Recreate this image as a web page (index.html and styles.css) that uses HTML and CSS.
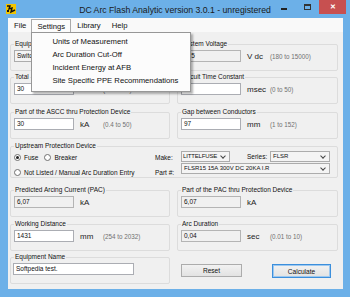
FILE: index.html
```html
<!DOCTYPE html>
<html lang="en">
<head>
    <meta charset="UTF-8">
    <title>DC Arc Flash Analytic</title>
    <link rel="stylesheet" href="styles.css">
</head>
<body>
<div class="window">
    <!-- Title bar -->
    <div class="titlebar">
        <div class="tb-left">
            <svg class="app-icon" width="10" height="10" viewBox="0 0 10 10">
                <rect width="10" height="10" fill="#f2c400"/>
                <path d="M1 2 L4 2 L3 5 L6 4 L5 8 L9 6" fill="none" stroke="#111" stroke-width="1.4"/>
                <rect x="1" y="6" width="2" height="2" fill="#111"/>
            </svg>
        </div>
        <div class="title">DC Arc Flash Analytic version 3.0.1 - unregistered</div>
        <div class="tb-right">
            <span class="cap-btn cap-min"><span class="min-bar"></span></span>
            <span class="cap-btn cap-max"><span class="max-box"></span></span>
            <span class="cap-btn cap-close">&#x2715;</span>
        </div>
    </div>

    <div class="frame">
        <!-- Menu bar -->
        <div class="menubar">
            <span class="menu-item">File</span>
            <span class="menu-item open">Settings
                <div class="dropdown">
                    <div class="dd-item">Units of Measurement</div>
                    <div class="dd-item">Arc Duration Cut-Off</div>
                    <div class="dd-item">Incident Energy at AFB</div>
                    <div class="dd-item">Site Specific PPE Recommendations</div>
                </div>
            </span>
            <span class="menu-item">Library</span>
            <span class="menu-item">Help</span>
        </div>

        <div class="client">
            <!-- row 1 -->
            <fieldset class="group">
                <legend>Equip</legend>
                <div class="field">
                    <span class="combo equip">Switc</span>
                </div>
            </fieldset>
            <fieldset class="group">
                <legend>System Voltage</legend>
                <div class="field">
                    <span class="tb ro">125</span>
                    <span class="unit">V dc</span>
                    <span class="range">(180 to 15000)</span>
                </div>
            </fieldset>

            <!-- row 2 -->
            <fieldset class="group">
                <legend>Total</legend>
                <div class="field">
                    <span class="tb">30</span>
                    <span class="unit">kA</span>
                    <span class="range">(0.4 to 50)</span>
                </div>
            </fieldset>
            <fieldset class="group">
                <legend>Circuit Time Constant</legend>
                <div class="field">
                    <span class="tb">5</span>
                    <span class="unit">msec</span>
                    <span class="range">(0 to 50)</span>
                </div>
            </fieldset>

            <!-- row 3 -->
            <fieldset class="group">
                <legend>Part of the ASCC thru Protection Device</legend>
                <div class="field">
                    <span class="tb">30</span>
                    <span class="unit">kA</span>
                    <span class="range">(0.4 to 50)</span>
                </div>
            </fieldset>
            <fieldset class="group">
                <legend>Gap between Conductors</legend>
                <div class="field">
                    <span class="tb">97</span>
                    <span class="unit">mm</span>
                    <span class="range">(1 to 152)</span>
                </div>
            </fieldset>

            <!-- row 4 -->
            <fieldset class="group upstream">
                <legend>Upstream Protection Device</legend>
                <div class="up-body">
                    <div class="radios">
                        <div class="radio-row">
                            <span class="opt"><span class="radio on"></span>Fuse</span>
                            <span class="opt"><span class="radio"></span>Breaker</span>
                        </div>
                        <div class="radio-row">
                            <span class="opt"><span class="radio"></span>Not Listed / Manual Arc Duration Entry</span>
                        </div>
                    </div>
                    <div class="part-labels">
                        <span>Make:</span>
                        <span>Part #:</span>
                    </div>
                    <div class="combos">
                        <div class="combo-row">
                            <span class="combo make">LITTELFUSE</span>
                            <span class="series-label">Series:</span>
                            <span class="combo series">FLSR</span>
                        </div>
                        <span class="combo part">FLSR15 15A 300V DC 20KA I.R</span>
                    </div>
                </div>
            </fieldset>

            <!-- row 5 -->
            <fieldset class="group">
                <legend>Predicted Arcing Current (PAC)</legend>
                <div class="field">
                    <span class="tb ro">6,07</span>
                    <span class="unit">kA</span>
                </div>
            </fieldset>
            <fieldset class="group">
                <legend>Part of the PAC thru Protection Device</legend>
                <div class="field">
                    <span class="tb ro">6,07</span>
                    <span class="unit">kA</span>
                </div>
            </fieldset>

            <!-- row 6 -->
            <fieldset class="group">
                <legend>Working Distance</legend>
                <div class="field">
                    <span class="tb">1431</span>
                    <span class="unit">mm</span>
                    <span class="range">(254 to 2032)</span>
                </div>
            </fieldset>
            <fieldset class="group">
                <legend>Arc Duration</legend>
                <div class="field">
                    <span class="tb ro">0,04</span>
                    <span class="unit">sec</span>
                    <span class="range">(0.01 to 10)</span>
                </div>
            </fieldset>

            <!-- row 7 -->
            <fieldset class="group">
                <legend>Equipment Name</legend>
                <div class="field">
                    <span class="tb wide">Softpedia test.</span>
                </div>
            </fieldset>
            <div class="buttons">
                <button class="btn reset">Reset</button>
                <button class="btn calc">Calculate</button>
            </div>
        </div>
    </div>
</div>
</body>
</html>
```

FILE: styles.css
```css
* {
    box-sizing: border-box;
}

body {
    margin: 0;
    font-family: "Liberation Sans", Arial, sans-serif;
    background-color: #6cb0e8;
}

.window {
    width: 350px;
    height: 297px;
    background-color: #6cb0e8;
    display: flex;
    flex-direction: column;
}

/* Title bar */
.titlebar {
    height: 18px;
    display: grid;
    grid-template-columns: 1fr auto 1fr;
    align-items: center;
}

.tb-left {
    padding-left: 6px;
    display: flex;
    align-items: center;
}

.title {
    font-size: 8.7px;
    color: #1a1a1a;
    margin-top: 2px;
}

.tb-right {
    display: flex;
    justify-content: flex-end;
    align-self: start;
    padding-right: 4px;
}

.cap-btn {
    height: 14px;
    display: flex;
    align-items: center;
    justify-content: center;
}

.cap-min {
    width: 24px;
}

.min-bar {
    width: 6px;
    height: 2px;
    background-color: #222;
    margin-top: 4px;
}

.cap-max {
    width: 23px;
}

.max-box {
    width: 7px;
    height: 6px;
    border: 1px solid #333;
    border-top-width: 2px;
}

.cap-close {
    width: 27px;
    background-color: #c75050;
    color: #fff;
    font-size: 7px;
    font-weight: bold;
}

/* Frame */
.frame {
    flex: 1;
    margin: 0 7px 8px 8px;
    background-color: #f0f0f0;
    display: flex;
    flex-direction: column;
}

.menubar {
    height: 14px;
    background-color: #f9f9f9;
    display: flex;
    align-items: stretch;
    font-size: 7.7px;
    color: #111;
}

.menu-item {
    position: relative;
    padding: 3px 5px 0 6px;
}

.menu-item.open {
    background-color: #fcfcfc;
    border: 1px solid #a9a9a9;
    border-bottom: none;
    padding: 2px 5px 0 5px;
    margin-top: 1px;
}

.dropdown {
    position: absolute;
    top: 12px;
    left: -1px;
    width: 160px;
    padding: 2px 0 4px;
    background-color: #fcfcfc;
    border: 1px solid #979797;
    box-shadow: 2px 2px 2px rgba(0, 0, 0, 0.3);
    z-index: 10;
}

.dd-item {
    height: 13px;
    line-height: 13px;
    padding-left: 20px;
    white-space: nowrap;
}

/* Client area */
.client {
    flex: 1;
    padding: 8px 4px 0 2px;
    display: grid;
    grid-template-columns: 160px 161px;
    grid-template-rows: 33px 35px 34px 44px 34px 33px 31px;
    column-gap: 7px;
}

.group {
    margin: 0;
    padding: 2px 3px 0;
    border: 1px solid #dcdcdc;
    border-radius: 2px;
    height: 31px;
    min-width: 0;
}

.group legend {
    font-size: 6.5px;
    line-height: 8px;
    padding: 0 1px;
    margin-left: 0;
    color: #111;
    white-space: nowrap;
}

.field {
    display: flex;
    align-items: center;
    height: 12px;
}

.tb {
    width: 60px;
    height: 12px;
    border: 1px solid #abadb3;
    background-color: #fff;
    font-size: 6.5px;
    line-height: 10px;
    padding-left: 2px;
    color: #111;
    white-space: nowrap;
    overflow: hidden;
}

.tb.ro {
    background-color: #f0f0f0;
    border-color: #b4b4b4;
}

.tb.wide {
    width: 121px;
    margin-left: -1px;
}

.unit {
    width: 23px;
    margin-left: 6px;
    font-size: 8px;
    color: #222;
}

.range {
    font-size: 6.3px;
    color: #707070;
    white-space: nowrap;
}

/* Combo boxes */
.combo {
    position: relative;
    height: 11px;
    border: 1px solid #acacac;
    background-color: #f4f4f4;
    font-size: 6px;
    line-height: 9px;
    padding-left: 2px;
    color: #111;
    white-space: nowrap;
    overflow: hidden;
}

.combo::after {
    content: "";
    position: absolute;
    right: 4px;
    top: 2px;
    width: 3px;
    height: 3px;
    border-right: 1px solid #444;
    border-bottom: 1px solid #444;
    transform: rotate(45deg);
}

.combo.equip {
    width: 140px;
    height: 12px;
    line-height: 10px;
    font-size: 6.5px;
}

.combo.make {
    width: 49px;
    padding-left: 1px;
    letter-spacing: -0.15px;
}

.combo.series {
    width: 60px;
}

.combo.part {
    display: block;
    width: 149px;
}

/* Upstream group */
.group.upstream {
    grid-column: 1 / -1;
    height: 36px;
}

.up-body {
    display: flex;
}

.radios {
    width: 141px;
    display: flex;
    flex-direction: column;
    gap: 6px;
    padding-top: 1px;
}

.radio-row {
    display: flex;
    align-items: center;
    height: 9px;
    font-size: 6.5px;
    color: #111;
}

.opt {
    display: flex;
    align-items: center;
    margin-right: 6px;
    white-space: nowrap;
}

.radio {
    width: 7px;
    height: 7px;
    border: 1px solid #707070;
    border-radius: 50%;
    background-color: #fff;
    margin-right: 3px;
    position: relative;
}

.radio.on::after {
    content: "";
    position: absolute;
    left: 1px;
    top: 1px;
    width: 3px;
    height: 3px;
    border-radius: 50%;
    background-color: #222;
}

.part-labels {
    width: 26px;
    display: flex;
    flex-direction: column;
    gap: 6px;
    padding-top: 1px;
    font-size: 6.5px;
    color: #111;
}

.part-labels span {
    height: 9px;
    line-height: 9px;
}

.combos {
    display: flex;
    flex-direction: column;
    gap: 1px;
    margin-top: -1px;
}

.combo-row {
    display: flex;
    align-items: center;
}

.series-label {
    width: 40px;
    padding-left: 17px;
    font-size: 6.5px;
    color: #111;
}

/* Buttons */
.buttons {
    display: flex;
    align-items: flex-start;
    gap: 30px;
    padding: 11px 0 0 4px;
}

.btn {
    height: 14px;
    padding: 0;
    font-family: "Liberation Sans", Arial, sans-serif;
    font-size: 6.6px;
    color: #111;
    background: linear-gradient(#f2f2f2, #e2e2e2);
    border: 1px solid #acacac;
}

.btn.reset {
    width: 61px;
    height: 13px;
}

.btn.calc {
    width: 59px;
    border-color: #3c8fdc;
    box-shadow: inset 0 0 0 1px #9cc8f0;
}
```
